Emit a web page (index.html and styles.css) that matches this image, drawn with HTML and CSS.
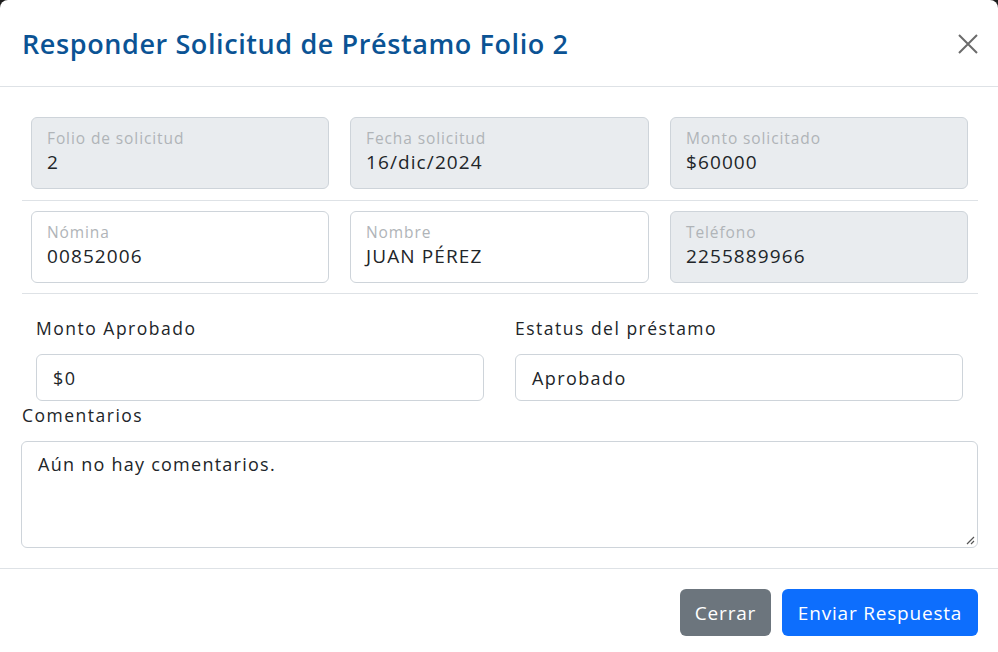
FILE: index.html
```html
<!DOCTYPE html>
<html lang="es">
<head>
<meta charset="utf-8">
<title>Responder Solicitud</title>
<link rel="stylesheet" href="styles.css">
</head>
<body>
<div class="modal">
  <div class="modal-header">
    <h5 class="modal-title">Responder Solicitud de Préstamo Folio 2</h5>
    <button class="btn-close" aria-label="Cerrar">
      <svg width="20" height="20" viewBox="0 0 20 20"><path d="M1 1L19 19M19 1L1 19" stroke="#6b6b6b" stroke-width="2" fill="none"/></svg>
    </button>
  </div>
  <div class="modal-body">
    <div class="grid3">
      <div class="floating disabled"><span class="fl-label">Folio de solicitud</span><span class="fl-value">2</span></div>
      <div class="floating disabled"><span class="fl-label">Fecha solicitud</span><span class="fl-value">16/dic/2024</span></div>
      <div class="floating disabled"><span class="fl-label">Monto solicitado</span><span class="fl-value">$60000</span></div>
    </div>
    <hr class="sep sep-first">
    <div class="grid3">
      <div class="floating"><span class="fl-label">Nómina</span><span class="fl-value">00852006</span></div>
      <div class="floating"><span class="fl-label">Nombre</span><span class="fl-value">JUAN PÉREZ</span></div>
      <div class="floating disabled"><span class="fl-label">Teléfono</span><span class="fl-value">2255889966</span></div>
    </div>
    <hr class="sep">
    <div class="grid2">
      <div class="field">
        <label class="lbl">Monto Aprobado</label>
        <div class="input">$0</div>
      </div>
      <div class="field">
        <label class="lbl">Estatus del préstamo</label>
        <div class="input">Aprobado</div>
      </div>
    </div>
    <div class="comments">
      <label class="lbl">Comentarios</label>
      <div class="textarea">Aún no hay comentarios.
        <svg class="grip" width="10" height="10" viewBox="0 0 10 10"><path d="M9 2L2 9M9 6L6 9" stroke="#555" stroke-width="1.2"/></svg>
      </div>
    </div>
  </div>
  <div class="modal-footer">
    <button class="btn btn-secondary">Cerrar</button>
    <button class="btn btn-primary">Enviar Respuesta</button>
  </div>
</div>
</body>
</html>
```

FILE: styles.css
```css
* { box-sizing: border-box; }
html, body { margin: 0; padding: 0; }
body {
  background: #1c1c1c;
  font-family: "Open Sans", "Noto Sans", sans-serif;
  color: #212529;
  width: 998px;
  height: 652px;
  overflow: hidden;
}
.modal {
  width: 998px;
  height: 660px;
  background: #fff;
  border-radius: 8px;
  display: flex;
  flex-direction: column;
}
.modal-header {
  height: 87px;
  border-bottom: 1px solid #dee2e6;
  display: flex;
  align-items: center;
  justify-content: space-between;
  padding: 0 20px 0 22px;
}
.modal-title {
  margin: 0;
  font-size: 27px;
  font-weight: 600;
  color: #0b5394;
  letter-spacing: 0.6px;
}
.btn-close {
  background: none;
  border: 0;
  padding: 0;
  width: 20px;
  height: 20px;
  margin-top: 2px;
}
.modal-body {
  padding: 30px 20px 20px 22px;
}
.grid3 {
  display: grid;
  grid-template-columns: 298px 299px 298px;
  column-gap: 21px;
  padding: 0 9px;
}
.floating {
  height: 72px;
  border: 1px solid #ced4da;
  border-radius: 6px;
  background: #fff;
  padding: 9px 15px 0;
  display: flex;
  flex-direction: column;
}
.floating.disabled { background: #e9ecef; }
.fl-label {
  font-size: 15.5px;
  color: #b0b4b8;
  line-height: 22px;
  letter-spacing: 0.9px;
}
.fl-value {
  font-size: 19px;
  line-height: 26px;
  color: #212529;
  letter-spacing: 1.1px;
}
.sep {
  border: 0;
  border-top: 1px solid #dee2e6;
  margin: 10px 0;
}
.sep-first { margin-top: 11px; }
.grid2 {
  display: grid;
  grid-template-columns: 448px 448px;
  column-gap: 31px;
  padding: 0 14px;
  margin-top: 21px;
}
.lbl {
  display: block;
  font-size: 17.5px;
  line-height: 27px;
  color: #212529;
  letter-spacing: 1.5px;
}
.field .lbl { margin-bottom: 12px; }
.input {
  height: 47px;
  border: 1px solid #ced4da;
  border-radius: 6px;
  padding: 0 16px;
  display: flex;
  align-items: center;
  font-size: 18px;
  letter-spacing: 1.4px;
}
.comments { margin-top: 1px; }
.comments .lbl { margin-bottom: 12px; }
.textarea {
  position: relative;
  height: 107px;
  border: 1px solid #ced4da;
  border-radius: 6px;
  padding: 9px 16px;
  font-size: 18px;
  line-height: 27px;
  letter-spacing: 1.25px;
  width: 957px;
  margin-left: -1px;
}
.grip { position: absolute; right: 2px; bottom: 2px; }
.modal-footer {
  border-top: 1px solid #dee2e6;
  display: flex;
  justify-content: flex-end;
  gap: 11px;
  padding: 20px 20px 0;
}
.btn {
  height: 47px;
  border: 0;
  border-radius: 6px;
  color: #fff;
  font-family: inherit;
  font-size: 19px;
  letter-spacing: 0.8px;
  padding: 0 10px;
}
.btn-secondary { background: #6c757d; width: 91px; }
.btn-primary { background: #0d6efd; width: 196px; }
```
